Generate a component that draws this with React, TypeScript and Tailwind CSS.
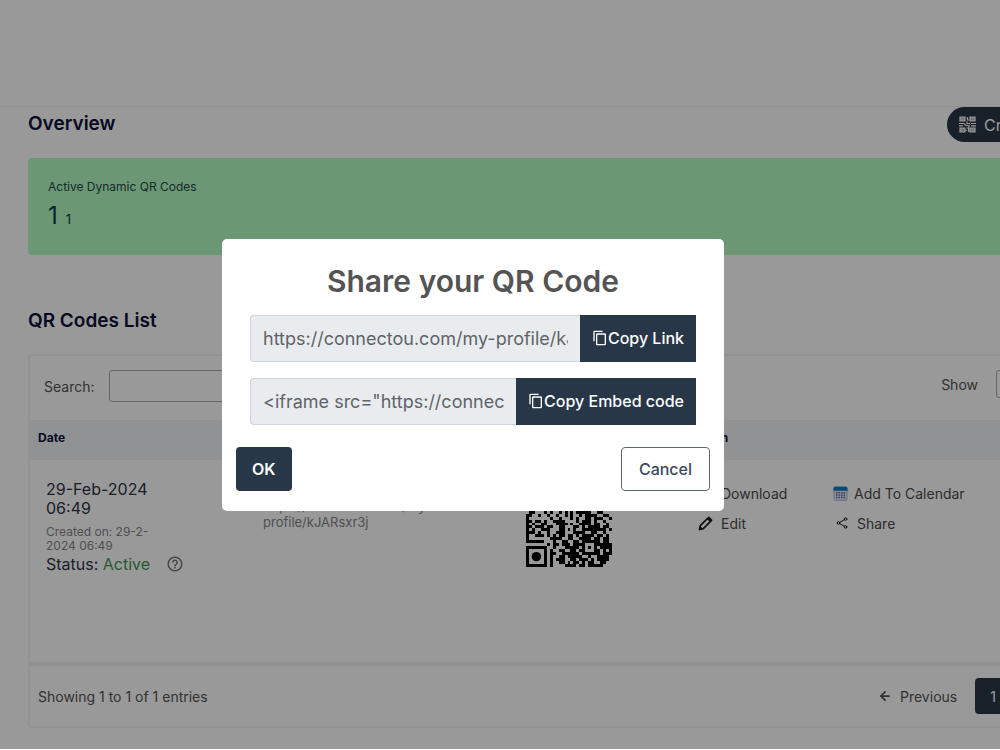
import React, { useState } from 'react';
import { MdContentCopy, MdHelpOutline } from 'react-icons/md';
import { IoShareSocialOutline, IoDownloadOutline } from 'react-icons/io5';
import { ArrowLeft } from 'lucide-react';

const PROFILE_URL = 'https://connectou.com/my-profile/kJARsxr3j';

// 29x29 modules, '#' is a dark one
const QR_ROWS = [
  '#######..#.##..#.#.##.#######',
  '#.....#.##..#.###..#..#.....#',
  '#.....#..#.#..#..###..#.....#',
  '#.....#.#.##.##.#.#.#.#.....#',
  '#.....#...#.##..##.#..#.....#',
  '#.....#.##..#.#..#.##.#.....#',
  '#######.#.#.#.#.#.#.#.#######',
  '........##.#..##.##.#........',
  '#.##.##..#.##.#..#.#.##.#.##.',
  '.#.#..#.##..##.##.##..#.##..#',
  '.##...#.#..#.#.#.#####..##...',
  '##..#..#..#..#.#..#.####..##.',
  '#.......#..#...#.#..##.###..#',
  '##.##.#..####....#.###.#..#..',
  '#.#..##...####.#..####.##..#.',
  '##.###.##..##...##.#.####.##.',
  '#.#..###...##.#.#..########.#',
  '###.#..#..###...####..##..#..',
  '#..###.#.#.##.##.#.####.##.#.',
  '#.......####..##..####.##.##.',
  '######...#..##..##.######.##.',
  '.......#.##.###.####...######',
  '#######..#...#####.#.#.#.####',
  '#.....#.#..##..##.##...##.#.#',
  '#.....#.##..######.######.###',
  '#.....#.#..##.#####..#..####.',
  '#.....#.#.###..##.###.#.####.',
  '#.....#.#..##.#.##.#.##..##..',
  '#######.#....####.##.#####...',
];

function QrCode() {
  return (
    <svg viewBox="0 0 29 29" className="size-[86px]" shapeRendering="crispEdges" role="img" aria-label="QR code">
      {QR_ROWS.map((row, y) =>
        row.split('').map((m, x) =>
          m === '#' ? <rect key={`${x}-${y}`} x={x} y={y} width="1" height="1" fill="#000" /> : null
        )
      )}
      {[[3.5, 3.5], [25.5, 3.5], [3.5, 25.5]].map(([cx, cy]) => (
        <circle key={`${cx}-${cy}`} cx={cx} cy={cy} r="1.6" shapeRendering="auto" />
      ))}
    </svg>
  );
}

function CalendarIcon() {
  return (
    <svg viewBox="0 0 16 16" className="size-[15px]" aria-hidden="true">
      <rect x="1" y="1" width="14" height="14.5" rx="1.5" fill="#dfe3f2" stroke="#a9aecb" strokeWidth="0.8" />
      <path d="M0.5 5V2.5A1.8 1.8 0 0 1 2.3.7h11.4a1.8 1.8 0 0 1 1.8 1.8V5z" fill="#0f7cc4" />
      {[6.5, 9, 11.5].map((y) =>
        [3.2, 5.9, 8.6, 11.3].map((x) => (
          <rect key={`${x}-${y}`} x={x} y={y} width="1.5" height="1.5" fill="#56609b" />
        ))
      )}
    </svg>
  );
}

function PencilIcon() {
  return (
    <svg viewBox="0 0 16 16" className="size-[15px]" fill="none" stroke="#14161c" strokeLinejoin="round" aria-hidden="true">
      <path d="M1.500 14.500l1-4.200 7.700-7.700 3.200 3.200-7.700 7.700z" strokeWidth="1.7" />
      <path d="M1.500 14.500l.8-3.200 2.400 2.400z" fill="#14161c" strokeWidth="1" />
      <path d="M10.300 2.500l1.300-1.300 3.200 3.200-1.300 1.300z" fill="#14161c" strokeWidth="1.300" />
    </svg>
  );
}

function QrBadgeIcon() {
  return (
    <svg viewBox="0 0 17 17" className="size-[17px]" fill="none" stroke="#fff" strokeWidth="1.2" aria-hidden="true">
      <path d="M1 1h5v4H1zM11 1h5v4h-5zM1 12h5v4H1zM11 12h5v4h-5z" fill="#ffffffb0" />
      <path d="M8.500 1v3h1.500M8 5.500v2h3M0 7.500h5l2 2h3v2M12 7.500h5M0 9.800h4M12 9.800h5M7.500 12h2v4M7 14.500h1" />
    </svg>
  );
}

type CopyFieldProps = { label: string; value: string; button: string };

function CopyField({ label, value, button }: CopyFieldProps) {
  const onCopy = () => navigator.clipboard?.writeText(value);

  return (
    <div className="flex h-[47px]">
      <input
        aria-label={label}
        readOnly
        value={value}
        className="min-w-0 flex-1 rounded-l border border-r-0 border-[#ced4da] bg-[#e9ecef] px-3 text-[18px] text-[#5f6468] outline-none"
      />
      <button
        type="button"
        onClick={onCopy}
        className="flex shrink-0 items-center bg-[#283747] px-3 text-[16px] font-medium text-white"
      >
        <MdContentCopy className="size-4" />
        {button}
      </button>
    </div>
  );
}

function ShareDialog({ onClose }: { onClose: () => void }) {
  return (
    <div className="fixed inset-x-0 top-0 bottom-px flex items-center justify-center bg-black/40 pr-[54px]">
      <div role="dialog" aria-labelledby="share-title" className="w-full max-w-[502px] rounded-[5px] bg-white px-[14px] pt-6 pb-5">
        <h2 id="share-title" className="text-center text-[30px] leading-9 font-semibold text-[#545454]">
          Share your QR Code
        </h2>
        <div className="mt-4 flex flex-col gap-4 px-[14px]">
          <CopyField label="Profile link" value={PROFILE_URL} button="Copy Link" />
          <CopyField label="Embed code" value={`<iframe src="${PROFILE_URL}"></iframe>`} button="Copy Embed code" />
        </div>
        <div className="mt-[22px] flex justify-between">
          <button type="button" onClick={onClose} className="h-11 rounded bg-[#283747] px-4 text-[16px] font-semibold text-white">
            OK
          </button>
          <button type="button" onClick={onClose} className="h-11 rounded border border-[#5d6875] bg-white px-[17px] text-[16px] font-medium text-[#3c4a5b]">
            Cancel
          </button>
        </div>
      </div>
    </div>
  );
}

export default function App() {
  const [shareOpen, setShareOpen] = useState(true);
  const [search, setSearch] = useState('');

  return (
    <div className="min-h-screen overflow-hidden bg-white font-['Inter','Liberation_Sans',sans-serif] text-[#545454]">
      <header className="h-[107px] border-b border-[#f0f0f0]" />

      <main className="-mr-24 pl-7">
        <div className="flex h-[35px] items-center justify-between">
          <h1 className="text-[19px] font-semibold text-[#0d0f38]">Overview</h1>
          <button type="button" className="flex h-[35px] w-[149px] items-center gap-2 rounded-full bg-[#283747] pl-3 text-[16px] text-white">
            <QrBadgeIcon />
            Create
          </button>
        </div>

        <section className="mt-4 h-[97px] rounded bg-[#b2fcc2] px-5 pt-[21px]">
          <p className="text-[12px] leading-4 text-[#2b4a4a]">Active Dynamic QR Codes</p>
          <p className="mt-[7px] flex items-baseline gap-2 text-[#0d3b45]">
            <span className="text-[24px] leading-7">1</span>
            <span className="text-[13px]">1</span>
          </p>
        </section>

        <h2 className="mt-[52px] text-[19px] leading-7 font-semibold text-[#0d0f38]">QR Codes List</h2>

        <section className="mt-[19px] rounded border-2 border-[#f5f5f8]">
          <div className="flex h-16 items-center justify-between pb-1 pl-[14px]">
            <div className="flex items-center gap-[14px]">
              <label htmlFor="search" className="text-[14px]">Search:</label>
              <input
                id="search"
                value={search}
                onChange={(e) => setSearch(e.target.value)}
                className="h-8 w-48 rounded-[3px] border border-[#a8a8ac] bg-transparent px-2 text-[14px]"
              />
            </div>
            <div className="flex items-center gap-[18px] pb-1">
              <label htmlFor="page-size" className="text-[14px]">Show</label>
              <select id="page-size" className="h-7 w-[98px] rounded-[3px] border border-[#a8a8ac] bg-transparent text-[14px]">
                <option>10</option>
              </select>
            </div>
          </div>

          <table className="w-full table-fixed text-left">
            <thead>
              <tr className="h-10 bg-[#f1f3f7] text-[12px] text-[#0d0f38]">
                <th className="w-[223px] pb-1 pl-2 font-bold">Date</th>
                <th className="w-[263px] pb-1 pl-2 font-bold">Name</th>
                <th className="w-[164px] pb-1 pl-2 font-bold">QR Code</th>
                <th className="pb-1 pl-[10px] font-bold">Action</th>
              </tr>
            </thead>
            <tbody>
              <tr className="h-[204px] border-b-4 border-[#f1f1f6] align-top">
                <td className="pt-5 pl-4">
                  <p className="w-28 text-[16px] leading-[19px] text-[#2d3546]">29-Feb-2024 06:49</p>
                  <p className="mt-[7px] w-28 text-[12px] leading-[14px] text-[#85858b]">Created on: 29-2-2024 06:49</p>
                  <p className="flex items-center text-[16px] leading-[22px] text-[#2d3546]">
                    Status:&nbsp;<span className="text-[#3f9850]">Active</span>
                    <MdHelpOutline className="ml-4 size-[18px] text-[#77777f]" />
                  </p>
                </td>
                <td className="pt-[38px] pl-[10px]">
                  <p className="w-44 text-[13px] leading-4 break-words text-[#85858b]">https://connectou.com/my-profile/kJARsxr3j</p>
                </td>
                <td className="pt-[21px] pl-[10px]">
                  <QrCode />
                </td>
                <td className="pt-[21px] pl-[18px]">
                  <div className="grid grid-cols-[135px_auto] gap-y-1.5 text-[14px] text-[#4c4c50]">
                    <button type="button" className="flex h-6 items-center gap-2">
                      <IoDownloadOutline className="size-[15px]" />
                      Download
                    </button>
                    <button type="button" className="flex h-6 items-center gap-[6px]">
                      <CalendarIcon />
                      Add To Calendar
                    </button>
                    <button type="button" className="flex h-6 items-center gap-2">
                      <PencilIcon />
                      Edit
                    </button>
                    <button type="button" onClick={() => setShareOpen(true)} className="flex h-6 items-center gap-2 pl-[2px]">
                      <IoShareSocialOutline className="size-[14px] text-black" />
                      Share
                    </button>
                  </div>
                </td>
              </tr>
            </tbody>
          </table>

          <div className="flex h-[60px] items-center justify-between pl-2 text-[14px]">
            <p>Showing 1 to 1 of 1 entries</p>
            <nav className="flex w-[216px] items-center">
              <a href="#previous" className="flex w-[97px] shrink-0 items-center gap-2">
                <ArrowLeft className="size-[14px]" strokeWidth={3} />
                Previous
              </a>
              <a href="#page-1" className="flex h-9 w-9 items-center justify-center rounded-sm bg-[#283747] text-white">1</a>
            </nav>
          </div>
        </section>
      </main>

      {shareOpen && <ShareDialog onClose={() => setShareOpen(false)} />}
    </div>
  );
}
